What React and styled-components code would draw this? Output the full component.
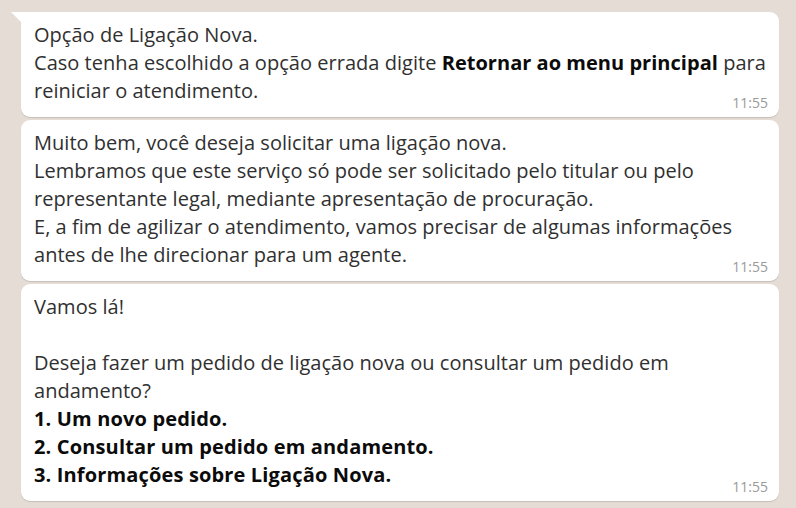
import React from "react";
import styled, { createGlobalStyle } from "styled-components";

const Global = createGlobalStyle`
  html, body { margin: 0; padding: 0; }
  body {
    background: #e5ddd5;
    font-family: "Open Sans", "Noto Sans", sans-serif;
    -webkit-font-smoothing: antialiased;
  }
`;

const Chat = styled.div`
  width: 796px;
  height: 508px;
  box-sizing: border-box;
  padding: 12px 17px 9px 11px;
  display: flex;
  flex-direction: column;
  gap: 3px;
  overflow: hidden;
  background: #e5ddd5;
`;

const Row = styled.div`
  display: flex;
  padding-left: 10px;
  position: relative;
`;

const Tail = styled.svg`
  position: absolute;
  left: 0;
  top: 0;
  width: 11px;
  height: 12px;
`;

const Bubble = styled.div`
  flex: 1;
  background: #ffffff;
  border-radius: ${(p) => (p.$first ? "0 9px 9px 9px" : "9px")};
  box-shadow: 0 1px 1px rgba(0, 0, 0, 0.14);
  padding: 9px 11px 6px 13px;
  display: flex;
  flex-direction: column;
`;

const Text = styled.div`
  font-size: 20px;
  line-height: 28px;
  color: #303030;
  white-space: nowrap;
  letter-spacing: 0.03px;
`;

const Line = styled.div`
  min-height: 28px;
  font-weight: ${(p) => (p.$bold ? 700 : 400)};
  color: ${(p) => (p.$bold ? "#0b0b0b" : "inherit")};
  letter-spacing: ${(p) => (p.$bold ? "0.15px" : "inherit")};
`;

const Strong = styled.b`
  font-weight: 700;
  color: #0b0b0b;
`;

const Meta = styled.div`
  display: flex;
  justify-content: flex-end;
  margin-top: -10px;
  height: 16px;
  line-height: 16px;
  font-size: 14px;
  color: #9a9a9a;
`;

function Message({ first, children }) {
  return (
    <Row>
      {first && (
        <Tail viewBox="0 0 11 12">
          <path d="M11 0 L0 0 L11 11 Z" fill="#ffffff" />
        </Tail>
      )}
      <Bubble $first={first}>
        <Text>{children}</Text>
        <Meta>11:55</Meta>
      </Bubble>
    </Row>
  );
}

export default function App() {
  return (
    <>
      <Global />
      <Chat>
        <Message first>
          <Line>Opção de Ligação Nova.</Line>
          <Line>
            Caso tenha escolhido a opção errada digite{" "}
            <Strong>Retornar ao menu principal</Strong> para
          </Line>
          <Line>reiniciar o atendimento.</Line>
        </Message>
        <Message>
          <Line>Muito bem, você deseja solicitar uma ligação nova.</Line>
          <Line>
            Lembramos que este serviço só pode ser solicitado pelo titular ou pelo
          </Line>
          <Line>representante legal, mediante apresentação de procuração.</Line>
          <Line>
            E, a fim de agilizar o atendimento, vamos precisar de algumas informações
          </Line>
          <Line>antes de lhe direcionar para um agente.</Line>
        </Message>
        <Message>
          <Line>Vamos lá!</Line>
          <Line />
          <Line>
            Deseja fazer um pedido de ligação nova ou consultar um pedido em
          </Line>
          <Line>andamento?</Line>
          <Line $bold>1. Um novo pedido.</Line>
          <Line $bold>2. Consultar um pedido em andamento.</Line>
          <Line $bold>3. Informações sobre Ligação Nova.</Line>
        </Message>
      </Chat>
    </>
  );
}
